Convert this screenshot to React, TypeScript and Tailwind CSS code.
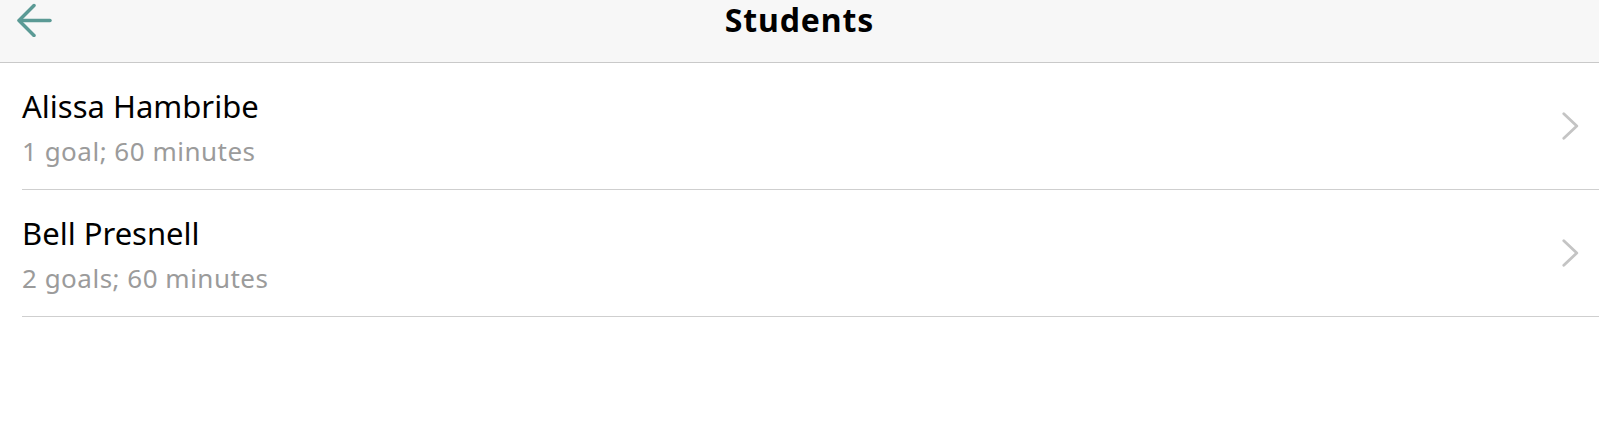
const students = [
  { name: "Alissa Hambribe", detail: "1 goal; 60 minutes" },
  { name: "Bell Presnell", detail: "2 goals; 60 minutes" },
];

export default function App() {
  return (
    <div className="min-h-screen w-full bg-white font-['Noto_Sans',sans-serif]">
      <header className="relative flex h-[63px] items-start justify-center border-b border-[#c9c9c9] bg-[#f7f7f7]">
        <button className="absolute left-[15px] top-[3px] text-[#5b9a95]">
          <svg width="38" height="34" viewBox="0 0 38 34" fill="none" stroke="currentColor" strokeWidth="3.5" strokeLinecap="round" strokeLinejoin="round">
            <path d="M35 17.5H4.5" />
            <path d="M19 2.5L4 17.5l15 15" />
          </svg>
        </button>
        <h1 className="text-[32px] font-bold leading-[40px] tracking-[0.9px] text-black">Students</h1>
      </header>
      <ul className="pl-[22px]">
        {students.map((s) => (
          <li key={s.name} className="flex h-[127px] border-b border-[#cfcfcf] pr-[20px]">
            <div className="flex flex-1 flex-col pt-[23px]">
              <span className="text-[31px] leading-[40px] text-black">{s.name}</span>
              <span className="text-[26px] leading-[50px] tracking-[0.5px] text-[#9b9b9b]">{s.detail}</span>
            </div>
            <div className="flex items-center">
              <svg width="17" height="28" viewBox="0 0 17 28" fill="none" stroke="#c4c4c4" strokeWidth="2.8" strokeLinecap="round" strokeLinejoin="round">
                <path d="M1.8 1.8L14.8 14L1.8 26.2" />
              </svg>
            </div>
          </li>
        ))}
      </ul>
    </div>
  );
}
